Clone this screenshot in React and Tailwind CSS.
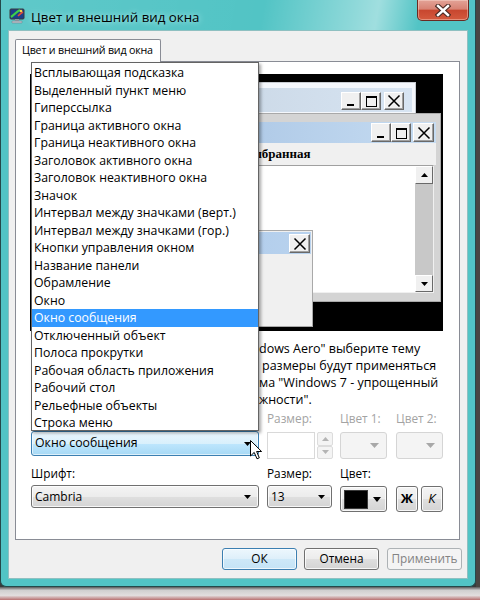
import React from "react";

const items = [
  "Всплывающая подсказка",
  "Выделенный пункт меню",
  "Гиперссылка",
  "Граница активного окна",
  "Граница неактивного окна",
  "Заголовок активного окна",
  "Заголовок неактивного окна",
  "Значок",
  "Интервал между значками (верт.)",
  "Интервал между значками (гор.)",
  "Кнопки управления окном",
  "Название панели",
  "Обрамление",
  "Окно",
  "Окно сообщения",
  "Отключенный объект",
  "Полоса прокрутки",
  "Рабочая область приложения",
  "Рабочий стол",
  "Рельефные объекты",
  "Строка меню",
];

function Glyph({ type }) {
  return (
    <svg width="18" height="16" viewBox="0 0 18 16">
      {type === "min" && <rect x="5" y="11" width="7" height="2" fill="#000" />}
      {type === "max" && (
        <g>
          <rect x="4.5" y="3.5" width="10" height="10" fill="none" stroke="#000" strokeWidth="1" />
          <rect x="4" y="3" width="11" height="2" fill="#000" />
        </g>
      )}
      {type === "close" && (
        <path d="M3.5 2.5 L14.5 13.5 M14.5 2.5 L3.5 13.5" stroke="#000" strokeWidth="1.5" fill="none" />
      )}
    </svg>
  );
}

function Cap({ type, cls }) {
  return (
    <div
      className={
        "flex items-center justify-center border border-t-white border-l-white border-b-[#696969] border-r-[#696969] bg-[#f0f0f0] shadow-[inset_-1px_-1px_0_#a0a0a0] " +
        cls
      }
    >
      <Glyph type={type} />
    </div>
  );
}

function Tri({ color = "#000", w = 7, h = 4 }) {
  return (
    <svg width={w} height={h} viewBox={`0 0 ${w} ${h}`}>
      <path d={`M0 0 H${w} L${w / 2} ${h} Z`} fill={color} />
    </svg>
  );
}

function TriUp({ color = "#000" }) {
  return (
    <svg width="7" height="4" viewBox="0 0 7 4">
      <path d="M0 4 H7 L3.5 0 Z" fill={color} />
    </svg>
  );
}

function TitleIcon() {
  return (
    <svg width="16" height="16" viewBox="0 0 16 16">
      <rect x="1" y="1" width="14" height="10" rx="1" fill="#1c3f8a" stroke="#3b3b3b" strokeWidth="1" />
      <path d="M2 9 C5 7 7 4 11 2" stroke="#3ed04a" strokeWidth="2.2" fill="none" />
      <path d="M9 8 C11 6 12 5 14 4" stroke="#e04a3a" strokeWidth="1.6" fill="none" />
      <circle cx="12" cy="3" r="1.3" fill="#f2d24a" />
      <rect x="6" y="11" width="4" height="2" fill="#8d9aa5" />
      <rect x="3" y="13" width="10" height="2" rx="0.5" fill="#b9c3cc" stroke="#6d7780" strokeWidth="0.5" />
    </svg>
  );
}

function Line({ hidden, visible, pad = "" }) {
  return (
    <div className="flex h-[17px] leading-[17px] whitespace-nowrap">
      <span className="flex w-[228px] shrink-0 justify-end overflow-hidden">
        <span className="shrink-0">{hidden}</span>
      </span>
      <span className={pad}>{visible}</span>
    </div>
  );
}

const btnGray =
  "border border-[#707070] rounded-[3px] bg-[linear-gradient(180deg,#f4f4f4_0%,#ececec_50%,#dfdfdf_51%,#d4d4d4_100%)] shadow-[inset_0_0_0_1px_rgba(255,255,255,0.8)]";

export default function App() {
  return (
    <div className="w-[480px] h-[600px] overflow-hidden flex flex-col bg-[#3a3a3a] font-['Open_Sans','Noto_Sans',sans-serif] text-[12px] text-black">
      <div className="flex">
        {/* Window */}
        <div className="w-[476px] h-[587px] shrink-0 flex flex-col border-l border-r border-b border-[#24494a] rounded-b-[6px] bg-[#52c4c5]">
          {/* Title bar */}
          <div className="h-[30px] flex items-start bg-[linear-gradient(100deg,rgba(255,255,255,0.08)_0%,rgba(255,255,255,0)_55%,rgba(255,255,255,0.35)_74%,rgba(255,255,255,0.45)_79%,rgba(255,255,255,0)_88%)]">
            <div className="ml-[8px] mt-[8px] w-[16px] h-[16px]">
              <TitleIcon />
            </div>
            <div className="ml-[6px] mt-[7px] text-[13.3px] leading-[20px] whitespace-nowrap [text-shadow:0_0_6px_rgba(220,255,255,0.9)]">
              Цвет и внешний вид окна
            </div>
            <div className="ml-auto mr-[6px] w-[52px] h-[21px] rounded-b-[5px] border border-t-0 border-[#6b2a22] bg-[linear-gradient(180deg,#e3a397_0%,#d88374_45%,#c8472f_52%,#d45a3e_100%)] shadow-[inset_0_0_0_1px_rgba(255,230,220,0.4)] flex items-center justify-center">
              <svg width="16" height="13" viewBox="0 0 16 13">
                <path d="M3 2 L13 11 M13 2 L3 11" stroke="#4a2a24" strokeWidth="4.6" strokeLinecap="square" fill="none" />
                <path d="M3 2 L13 11 M13 2 L3 11" stroke="#ffffff" strokeWidth="2.4" strokeLinecap="square" fill="none" />
              </svg>
            </div>
          </div>

          {/* Client */}
          <div className="mx-[7px] h-[549px] flex flex-col bg-[#f0f0f0] border border-[#8fc0c1]">
            {/* Tab */}
            <div className="ml-[6px] mt-[8px] -mb-px relative z-10 w-[146px] h-[23px] bg-white border border-b-0 border-[#898c95] rounded-t-[2px] pl-[6px] leading-[21px] text-[10.7px] tracking-[-0.2px] whitespace-nowrap">
              Цвет и внешний вид окна
            </div>
            {/* Panel */}
            <div className="ml-[6px] w-[445px] h-[479px] bg-white border border-[#898c95] relative">
              {/* Preview */}
              <div className="ml-[14px] mt-[12px] w-[413px] h-[257px] bg-black relative overflow-hidden">
                {/* Inactive window */}
                <div className="absolute left-[10px] top-[8px] w-[376px] h-[110px] bg-[#f4f7fc] border border-[#c8ccd2] pt-[5px] px-[3px]">
                  <div className="h-[24px] flex items-start bg-[linear-gradient(90deg,#bfcddb,#d7e4f2)] pr-[8px]">
                    <span className="ml-[4px] mt-[4px] text-[#434e54] leading-[16px] text-[11px]">Неактивное окно</span>
                    <div className="ml-auto mt-[4px] flex">
                      <Cap type="min" cls="w-[20px] h-[18px]" />
                      <Cap type="max" cls="w-[20px] h-[18px]" />
                      <Cap type="close" cls="ml-[3px] w-[20px] h-[18px]" />
                    </div>
                  </div>
                </div>

                {/* Active window */}
                <div className="absolute left-[20px] top-[39px] w-[391px] h-[189px] bg-[#d4d4d4] border border-[#a9a9a9] pt-[8px] px-[4px] flex flex-col">
                  <div className="h-[21px] shrink-0 flex items-start bg-[linear-gradient(90deg,#99b8dc,#c6dcf2)] pr-[2px]">
                    <span className="ml-[4px] mt-[2px] leading-[16px] text-[11px]">Активное окно</span>
                    <div className="ml-auto mt-[1px] flex">
                      <Cap type="min" cls="w-[20px] h-[19px]" />
                      <Cap type="max" cls="w-[20px] h-[19px]" />
                      <Cap type="close" cls="ml-[2px] w-[21px] h-[19px]" />
                    </div>
                  </div>
                  <div className="h-[22px] shrink-0 flex items-center bg-[#f0f0f0] font-['Liberation_Serif',serif] font-bold text-[13px] pl-[6px]">
                    <span className="w-[72px]">Обычная</span>
                    <span className="w-[110px] text-[#8d8d8d]">Отключенная</span>
                    <span>Выбранная</span>
                  </div>
                  <div className="h-[128px] shrink-0 mr-[2px] bg-white border border-t-[#a0a0a0] border-l-[#a0a0a0] border-b-[#f0f0f0] border-r-[#f0f0f0] flex">
                    <div className="flex-1 pl-[4px] pt-[2px] text-[11px]">Текст окна</div>
                    <div className="w-[18px] flex flex-col bg-[#c8c8c8]">
                      <div className="h-[18px] flex items-center justify-center border border-t-white border-l-white border-b-[#696969] border-r-[#696969] bg-[#f0f0f0]">
                        <TriUp />
                      </div>
                      <div className="flex-1" />
                      <div className="h-[17px] flex items-center justify-center border border-t-white border-l-white border-b-[#696969] border-r-[#696969] bg-[#f0f0f0]">
                        <Tri />
                      </div>
                    </div>
                  </div>
                </div>

                {/* Message box */}
                <div className="absolute left-[40px] top-[156px] w-[243px] h-[97px] bg-[#f0f0f0] border border-[#a9a9a9] p-px flex flex-col text-[11px]">
                  <div className="h-[22px] shrink-0 flex items-start bg-[linear-gradient(90deg,#a6c4e6,#b8d2ee)] pr-px">
                    <span className="ml-[4px] mt-[3px] leading-[16px]">Окно сообщения</span>
                    <Cap type="close" cls="ml-auto mt-[2px] w-[21px] h-[19px]" />
                  </div>
                  <div className="flex-1 flex flex-col px-[6px] pt-[6px]">
                    <span>Текст сообщения</span>
                    <div className="mt-[10px] self-center w-[70px] h-[22px] border border-[#707070] bg-[#e8e8e8] flex items-center justify-center">
                      OK
                    </div>
                  </div>
                </div>
              </div>

              {/* Info text */}
              <div className="mt-[9px] ml-[15px] text-[12.5px]">
                <Line hidden={'Для темы "Windows 7" или "Win'} visible={'dows Aero" выберите тему'} />
                <Line hidden={'"Классическая". Цвета и'} visible="размеры будут применяться" pad="pl-[3px]" />
                <Line hidden="только при выборе те" visible={'ма "Windows 7 - упрощенный'} />
                <Line hidden={'стиль" или "Специальные возмо'} visible={'жности".'} />
              </div>

              {/* Labels row 1 */}
              <div className="mt-[3px] h-[15px] leading-[15px] flex text-[#a3a3a3] text-[11.8px]">
                <span className="ml-[15px] w-[236px] text-black">Элемент:</span>
                <span className="w-[73px]">Размер:</span>
                <span className="w-[56px]">Цвет 1:</span>
                <span>Цвет 2:</span>
              </div>

              {/* Controls row 1 */}
              <div className="mt-[5px] h-[28px] flex items-start">
                <div className="ml-[15px] w-[228px] h-[25px] relative flex items-center border border-[#3c7fb1] rounded-[3px] bg-[linear-gradient(180deg,#eaf6fd_0%,#d9f0fc_50%,#bee6fd_51%,#a7d9f5_100%)] shadow-[inset_0_0_0_1px_rgba(255,255,255,0.6)] pl-[3px] text-[12.3px]">
                  <span>Окно сообщения</span>
                  <span className="ml-auto mr-[7px] flex">
                    <Tri />
                  </span>
                </div>
                <div className="ml-[8px] mt-px w-[66px] h-[27px] flex">
                  <div className="w-[48px] h-full border border-[#d9d9d9] bg-white" />
                  <div className="ml-[2px] flex-1 flex flex-col">
                    <div className="flex-1 flex items-center justify-center border border-[#dcdcdc] rounded-[2px] bg-[#f4f4f4]">
                      <TriUp color="#b4b4b4" />
                    </div>
                    <div className="flex-1 flex items-center justify-center border border-[#dcdcdc] rounded-[2px] bg-[#f4f4f4]">
                      <Tri color="#b4b4b4" />
                    </div>
                  </div>
                </div>
                <div className="ml-[7px] mt-px w-[47px] h-[27px] border border-[#d5d5d5] rounded-[3px] bg-[#f4f4f4] flex items-center justify-end pr-[7px]">
                  <Tri color="#a8a8a8" w={9} h={5} />
                </div>
                <div className="ml-[9px] mt-px w-[47px] h-[27px] border border-[#d5d5d5] rounded-[3px] bg-[#f4f4f4] flex items-center justify-end pr-[7px]">
                  <Tri color="#a8a8a8" w={9} h={5} />
                </div>
              </div>

              {/* Labels row 2 */}
              <div className="mt-[7px] h-[15px] leading-[15px] flex text-[11.8px]">
                <span className="ml-[15px] w-[236px]">Шрифт:</span>
                <span className="w-[73px]">Размер:</span>
                <span>Цвет:</span>
              </div>

              {/* Controls row 2 */}
              <div className="mt-[4px] h-[27px] flex items-start">
                <div className={"ml-[15px] w-[228px] h-[23px] flex items-center pl-[3px] text-[12px] " + btnGray}>
                  <span>Cambria</span>
                  <span className="ml-auto mr-[7px] flex">
                    <Tri />
                  </span>
                </div>
                <div className={"ml-[8px] w-[65px] h-[23px] flex items-center pl-[3px] text-[12px] " + btnGray}>
                  <span>13</span>
                  <span className="ml-auto mr-[6px] flex">
                    <Tri />
                  </span>
                </div>
                <div className={"ml-[8px] mt-px w-[47px] h-[26px] flex items-center pl-[3px] " + btnGray}>
                  <div className="w-[24px] h-[19px] bg-black border border-[#3a3a3a]" />
                  <span className="ml-auto mr-[5px] flex">
                    <Tri w={8} h={5} />
                  </span>
                </div>
                <div className={"ml-[9px] mt-px w-[22px] h-[26px] flex items-center justify-center font-bold text-[13px] " + btnGray}>
                  Ж
                </div>
                <div className={"ml-[3px] mt-px w-[22px] h-[26px] flex items-center justify-center italic text-[13px] " + btnGray}>
                  К
                </div>
              </div>

              {/* Dropdown list */}
              <div className="absolute left-[15px] top-0 z-20 w-[228px] h-[369px] bg-white border border-[#646464] shadow-[2px_2px_3px_rgba(0,0,0,0.35)] py-px text-[12.3px]">
                {items.map((t, i) =>
                  i === 14 ? (
                    <div key={t} className="h-[17.5px] leading-[17.5px] pl-[2px] bg-[#3399ff] text-white whitespace-nowrap">
                      {t}
                    </div>
                  ) : (
                    <div key={t} className="h-[17.5px] leading-[17.5px] pl-[2px] whitespace-nowrap">
                      {t}
                    </div>
                  )
                )}
              </div>

              {/* Mouse cursor */}
              <svg className="absolute left-[234px] top-[378px] z-30" width="13" height="20" viewBox="0 0 13 20">
                <path d="M0.5 0.5 L0.5 16 L4.2 12.4 L7 18.8 L9.3 17.8 L6.6 11.5 L11.6 11.5 Z" fill="#fff" stroke="#000" strokeWidth="1" strokeLinejoin="round" />
              </svg>
            </div>

            {/* Buttons */}
            <div className="mt-[8px] h-[22px] flex justify-end pr-[5px] text-[11.8px]">
              <div className="w-[75px] h-[22px] flex items-center justify-center border border-[#3c7fb1] rounded-[3px] bg-[linear-gradient(180deg,#edf7fd_0%,#deeffa_50%,#cde8f8_51%,#c4e3f6_100%)] shadow-[inset_0_0_0_1px_rgba(255,255,255,0.7)]">
                ОК
              </div>
              <div className={"ml-[7px] w-[75px] h-[22px] flex items-center justify-center " + btnGray}>Отмена</div>
              <div className="ml-[8px] w-[75px] h-[22px] flex items-center justify-center border border-[#adb2b5] rounded-[3px] bg-[#f4f4f4] text-[#838383]">
                Применить
              </div>
            </div>
          </div>
        </div>
        <div className="flex-1 bg-[#4a4642]" />
      </div>
      <div className="flex-1 bg-[linear-gradient(180deg,#5a5a5a_0%,#cfcfcf_25%,#e2dede_65%,#b87070_100%)]" />
    </div>
  );
}
